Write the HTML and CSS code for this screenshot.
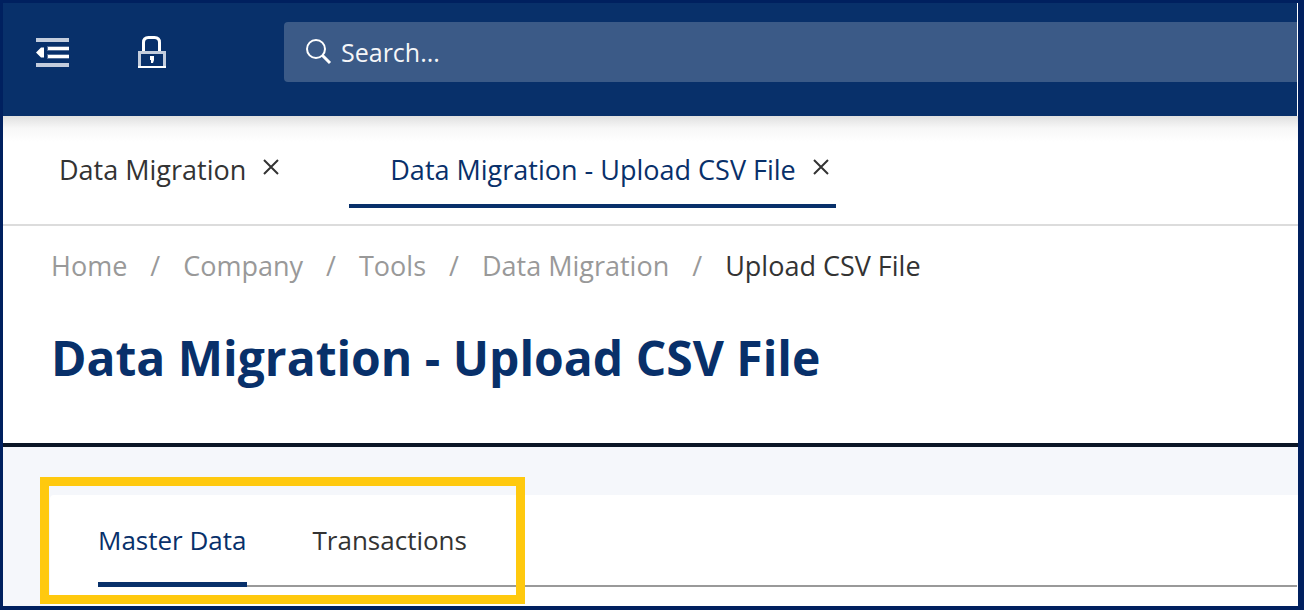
FILE: index.html
```html
<!doctype html>
<html lang="en">

<head>
  <meta charset="utf-8">
  <title>Data Migration - Upload CSV File</title>
  <meta name="viewport" content="width=device-width, initial-scale=1.0">
  <link rel="stylesheet" href="styles.css">
</head>

<body>
  <div class="app">

    <!-- Top Bar -->
    <header class="topbar">
      <button type="button" class="icon-button" aria-label="Collapse menu">
        <svg width="34" height="32" viewBox="0 0 34 32">
          <path fill="#c3cddd" d="M0 2h33v4H0zM0 27h33v4H0z" />
          <path fill="#c3cddd" d="M11 10h22v5H11zM11 18h22v5H11z" opacity="0.4" />
          <path fill="#fff" d="M12 11h21v3H12zM12 19h21v3H12zM0 16.500l5-5h3v10H5z" />
        </svg>
      </button>
      <button type="button" class="icon-button" aria-label="Lock">
        <svg width="30" height="34" viewBox="0 0 30 34" fill="none">
          <path stroke="#fff" stroke-width="3" d="M6.500 16V7.500Q6.500 2.500 11.500 2.500h6Q22.500 2.500 22.500 7.500V16" />
          <path stroke="#c3cddd" stroke-width="3" d="M2.500 32V17.500h25V32" />
          <path stroke="#fff" stroke-width="2" d="M1 32h28" />
          <path fill="#fff" d="M13 21h4v4l-1 3h-2v-3h-1z" />
        </svg>
      </button>
      <label class="search">
        <svg width="28" height="28" viewBox="0 0 28 28" fill="none" stroke="#fff">
          <circle cx="11" cy="11" r="9" stroke-width="2" />
          <path stroke-width="3" d="M17.500 17.500l7.500 7.500" />
        </svg>
        <input type="text" placeholder="Search..." aria-label="Search">
      </label>
    </header>

    <!-- Open Pages -->
    <nav class="page-tabs">
      <div class="page-tab">
        <a href="#">Data Migration</a>
        <button type="button" class="close" aria-label="Close Data Migration">
          <svg width="16" height="16" viewBox="0 0 16 16" stroke="#333" stroke-width="2">
            <path d="M1 1l14 14M15 1L1 15" />
          </svg>
        </button>
      </div>
      <div class="page-tab active">
        <a href="#">Data Migration - Upload CSV File</a>
        <button type="button" class="close" aria-label="Close Upload CSV File">
          <svg width="16" height="16" viewBox="0 0 16 16" stroke="#333" stroke-width="2">
            <path d="M1 1l14 14M15 1L1 15" />
          </svg>
        </button>
      </div>
    </nav>

    <!-- Page Title -->
    <div class="page-head">
      <nav class="breadcrumb">
        <a href="#">Home</a>
        <span>/</span>
        <a href="#">Company</a>
        <span>/</span>
        <a href="#">Tools</a>
        <span>/</span>
        <a href="#">Data Migration</a>
        <span>/</span>
        <a href="#" class="current">Upload CSV File</a>
      </nav>
      <h1>Data Migration - Upload CSV File</h1>
    </div>

    <!-- Content -->
    <main class="content">
      <section class="card">
        <div class="data-tabs" role="tablist">
          <button type="button" class="data-tab active" role="tab" aria-selected="true">Master Data</button>
          <button type="button" class="data-tab" role="tab" aria-selected="false">Transactions</button>
        </div>
        <div class="highlight"></div>
      </section>
    </main>
  </div>
</body>

</html>
```

FILE: styles.css
```css
* {
  box-sizing: border-box;
}

body {
  margin: 0;
  font-family: "Open Sans", "Noto Sans", sans-serif;
  font-size: 27px;
  line-height: 36px;
  color: #333;
}

a {
  color: inherit;
  text-decoration: none;
}

button {
  padding: 0;
  border: none;
  background: none;
  color: inherit;
  font: inherit;
  cursor: pointer;
}

svg {
  display: block;
}

.app {
  display: flex;
  flex-direction: column;
  min-height: 100vh;
  border: 3px solid #00205f;
  border-right-width: 6px;
  border-bottom-width: 4px;
  background-color: #fff;
}

.topbar {
  display: flex;
  align-items: center;
  height: 113px;
  margin-right: 1px;
  padding: 0 0 15px 33px;
  background-color: #08306a;
}

.icon-button {
  margin-right: 67px;
}

.search {
  display: flex;
  flex: 1;
  align-items: center;
  gap: 8px;
  height: 60px;
  margin-left: 50px;
  padding-left: 21px;
  border-radius: 4px 0 0 4px;
  background-color: #3b5a87;
}

.search input {
  flex: 1;
  min-width: 0;
  padding: 0;
  border: none;
  outline: none;
  background: none;
  color: #fff;
  font: inherit;
  font-size: 25px;
}

.search input::placeholder {
  color: #fff;
  opacity: 0.95;
}

.page-tabs {
  display: flex;
  gap: 63px;
  height: 110px;
  padding: 36px 0 16px 49px;
  border-bottom: 2px solid #dcdcdc;
  background: linear-gradient(#e0e0e0, #f7f7f7 12px, #fff 26px);
}

.page-tab {
  display: flex;
  align-items: flex-start;
  gap: 17px;
  padding: 0 7px;
}

.page-tab.active {
  padding-left: 41px;
  border-bottom: 4px solid #08306a;
  color: #08306a;
}

.close {
  margin-top: 7px;
}

.page-head {
  padding: 22px 48px 48px;
  border-bottom: 4px solid #0b1626;
}

.breadcrumb {
  display: flex;
  flex-wrap: wrap;
  gap: 23px;
  color: #999;
}

.breadcrumb .current {
  color: #333;
}

h1 {
  margin: 36px 0 0;
  color: #08306a;
  font-size: 48px;
  line-height: 75px;
}

.content {
  flex: 1;
  display: flex;
  padding: 48px 0 0 47px;
  background-color: #f5f7fb;
}

.card {
  position: relative;
  flex: 1;
  padding-left: 48px;
  border-radius: 4px 0 0 0;
  background-color: #fff;
}

.data-tabs {
  display: flex;
  gap: 66px;
  height: 92px;
  margin-right: 1px;
  border-bottom: 2px solid #999;
}

.data-tab {
  height: 92px;
  padding-top: 2px;
  border-bottom: 5px solid transparent;
  font-size: 26px;
}

.data-tab.active {
  border-color: #08306a;
  color: #08306a;
}

/* Frame around the tab choices */
.highlight {
  position: absolute;
  top: -18px;
  left: -10px;
  width: 485px;
  height: 127px;
  border: 9px solid #ffc90e;
  pointer-events: none;
}
```
